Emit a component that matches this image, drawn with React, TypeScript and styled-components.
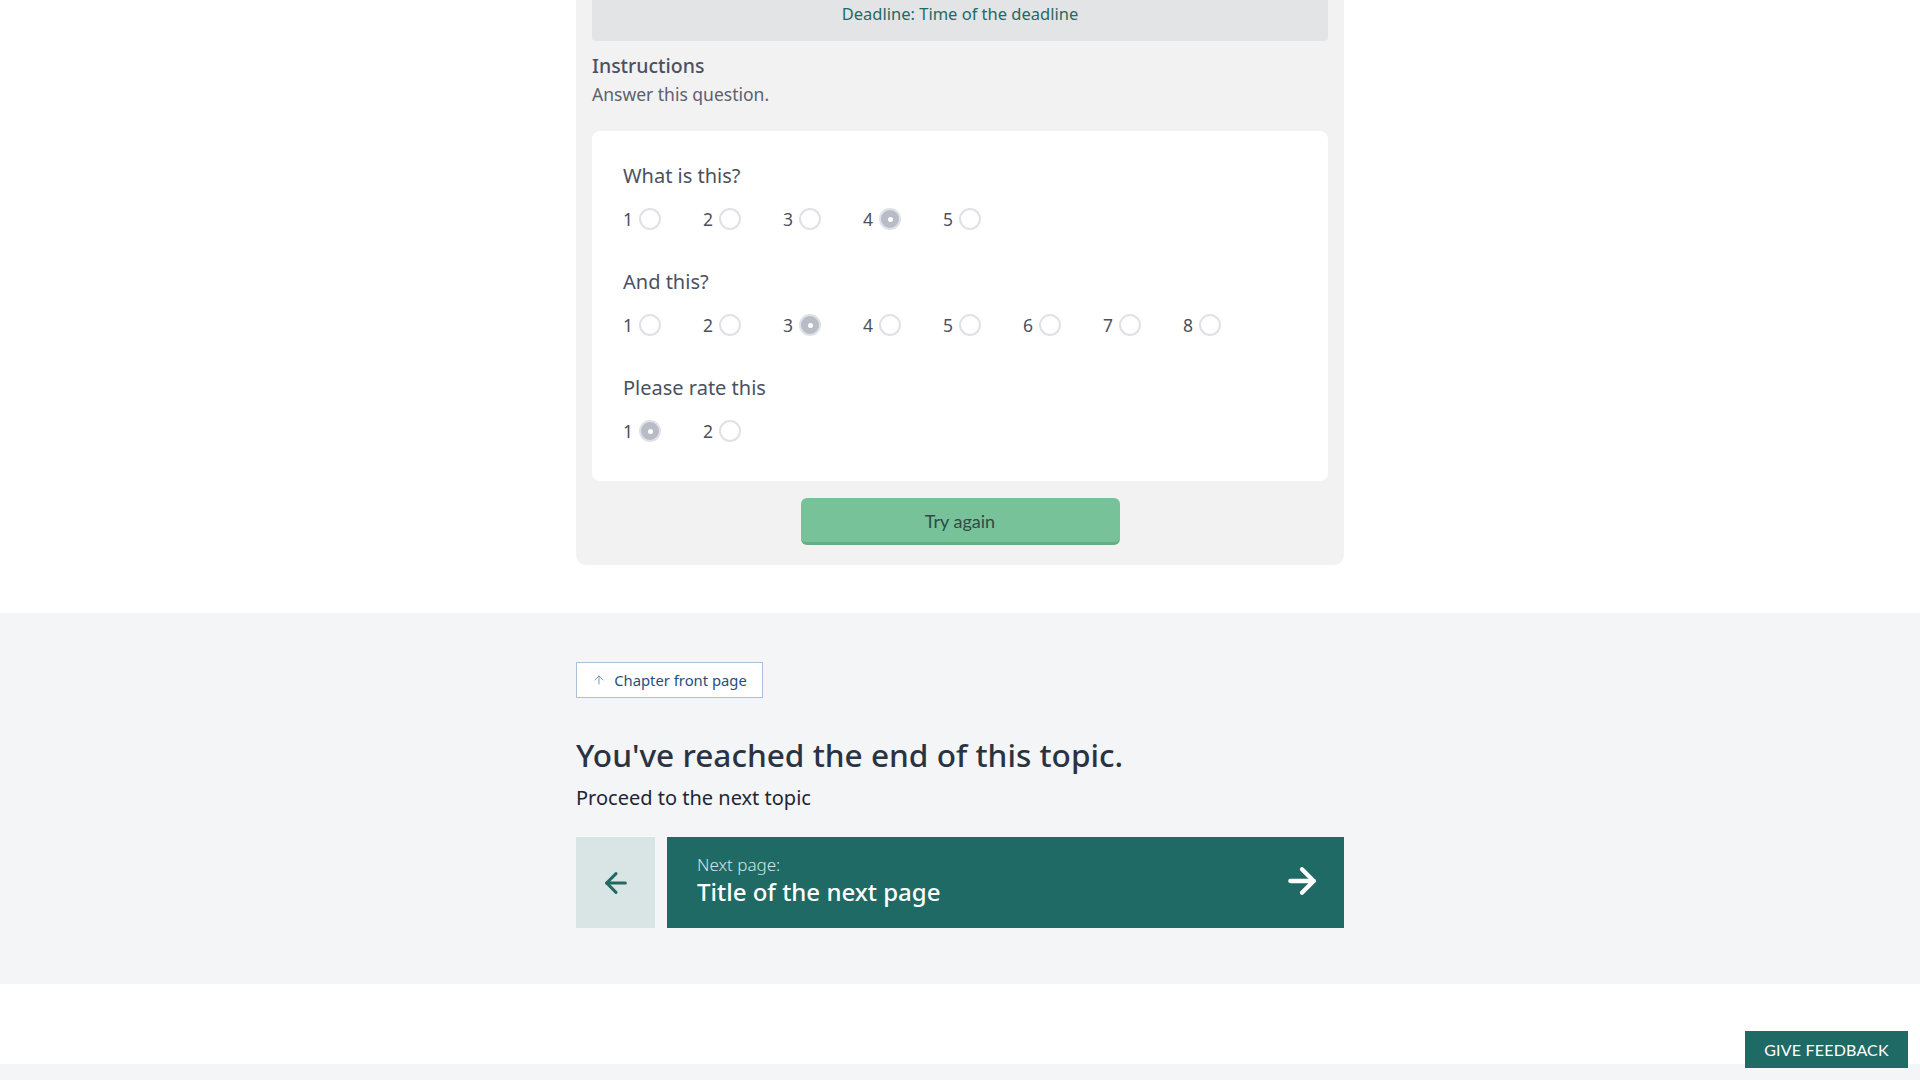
import React from 'react';
import styled, { createGlobalStyle } from 'styled-components';
import { ArrowUp, ArrowLeft, ArrowRight } from 'lucide-react';

const GlobalStyle = createGlobalStyle`
  html, body {
    margin: 0;
    padding: 0;
    background: #ffffff;
    font-family: 'Noto Sans', 'Lato', sans-serif;
    overflow: hidden;
  }
  * { box-sizing: border-box; }
`;

const Page = styled.div`
  display: flex;
  flex-direction: column;
  min-height: 1080px;
  background: #ffffff;
`;

const Top = styled.div`
  display: flex;
  justify-content: center;
  padding-bottom: 48px;
`;

const ExerciseCard = styled.section`
  width: 768px;
  margin-top: -30px;
  padding: 16px 16px 20px;
  background: #f2f2f2;
  border-radius: 10px;
  display: flex;
  flex-direction: column;
`;

const Deadline = styled.div`
  height: 55px;
  display: flex;
  align-items: center;
  justify-content: center;
  background: #e3e4e6;
  border-radius: 4px;
  color: #1f6a62;
  font-size: 16.5px;
`;

const InstructionsTitle = styled.h3`
  margin: 12px 0 0;
  font-size: 19.5px;
  font-weight: 500;
  line-height: 26px;
  color: #4a5160;
`;

const InstructionsText = styled.p`
  margin: 3px 0 0;
  font-size: 17.5px;
  line-height: 24px;
  color: #5b6170;
`;

const QuestionsBox = styled.div`
  margin-top: 25px;
  background: #ffffff;
  border-radius: 8px;
  padding: 32px 31px 38px;
  display: flex;
  flex-direction: column;
  gap: 38px;
`;

const Question = styled.div`
  display: flex;
  flex-direction: column;
  gap: 18px;
`;

const QuestionLabel = styled.div`
  font-size: 20px;
  line-height: 26px;
  color: #4a5160;
`;

const Options = styled.div`
  display: flex;
  height: 24px;
  align-items: center;
`;

const Option = styled.label`
  width: 80px;
  display: flex;
  align-items: center;
  gap: 6px;
  font-size: 17.5px;
  color: #4a5160;
`;

const Radio = styled.span<{ $checked?: boolean }>`
  width: 22px;
  height: 22px;
  border-radius: 50%;
  border: 2px solid #e0e1e6;
  background: ${(p) => (p.$checked ? '#b7bcc6' : '#ffffff')};
  display: flex;
  align-items: center;
  justify-content: center;

  &::after {
    content: '';
    width: 5px;
    height: 5px;
    border-radius: 50%;
    background: ${(p) => (p.$checked ? '#ffffff' : 'transparent')};
  }
`;

const TryAgain = styled.button`
  align-self: center;
  margin-top: 17px;
  width: 319px;
  height: 47px;
  border: none;
  border-bottom: 3px solid #67ad86;
  border-radius: 6px;
  background: #77c298;
  color: #2f4a46;
  font-family: 'Lato', sans-serif;
  font-size: 18px;
  padding-top: 2px;
`;

const EndSection = styled.section`
  background: #f4f5f7;
  display: flex;
  justify-content: center;
  padding: 49px 0 56px;
`;

const EndInner = styled.div`
  width: 768px;
  display: flex;
  flex-direction: column;
  align-items: flex-start;
`;

const ChapterLink = styled.a`
  height: 36px;
  width: 187px;
  display: flex;
  align-items: center;
  justify-content: center;
  gap: 8px;
  background: #ffffff;
  border: 1px solid #a9c0d8;
  color: #1f4f7e;
  font-size: 14.8px;
  text-decoration: none;

  svg { color: #6f8fae; }
`;

const EndTitle = styled.h2`
  margin: 37px 0 0;
  font-weight: 500;
  font-size: 31.6px;
  line-height: 40px;
  color: #2a3342;
`;

const EndText = styled.p`
  margin: 10px 0 0;
  font-size: 20px;
  line-height: 26px;
  color: #1f2633;
`;

const Nav = styled.nav`
  margin-top: 26px;
  width: 100%;
  height: 91px;
  display: flex;
  gap: 12px;
`;

const PrevButton = styled.a`
  width: 79px;
  background: #d9e5e5;
  color: #206a65;
  display: flex;
  align-items: center;
  justify-content: center;
`;

const NextButton = styled.a`
  flex: 1;
  background: #206a65;
  color: #ffffff;
  display: flex;
  align-items: center;
  justify-content: space-between;
  padding: 0 22px 3px 30px;
  text-decoration: none;
`;

const NextText = styled.div`
  display: flex;
  flex-direction: column;
`;

const NextLabel = styled.span`
  font-size: 17px;
  line-height: 22px;
  font-weight: 300;
  color: #d2e4e2;
`;

const NextTitle = styled.span`
  font-size: 24px;
  line-height: 32px;
  font-weight: 500;
`;

const Spacer = styled.div`
  height: 80px;
  background: #ffffff;
`;

const Footer = styled.footer`
  flex: 1;
  background: #f4f5f7;
`;

const Feedback = styled.button`
  position: fixed;
  right: 12px;
  bottom: 12px;
  width: 163px;
  height: 37px;
  border: none;
  background: #206a65;
  color: #ffffff;
  font-family: 'Lato', sans-serif;
  font-size: 16px;
  letter-spacing: 0.2px;
`;

const questions = [
  { label: 'What is this?', count: 5, checked: 4 },
  { label: 'And this?', count: 8, checked: 3 },
  { label: 'Please rate this', count: 2, checked: 1 },
];

export default function App() {
  return (
    <>
      <GlobalStyle />
      <Page>
        <Top>
          <ExerciseCard>
            <Deadline>Deadline: Time of the deadline</Deadline>
            <InstructionsTitle>Instructions</InstructionsTitle>
            <InstructionsText>Answer this question.</InstructionsText>
            <QuestionsBox>
              {questions.map((q) => (
                <Question key={q.label}>
                  <QuestionLabel>{q.label}</QuestionLabel>
                  <Options>
                    {Array.from({ length: q.count }, (_, i) => (
                      <Option key={i}>
                        {i + 1}
                        <Radio $checked={i + 1 === q.checked} />
                      </Option>
                    ))}
                  </Options>
                </Question>
              ))}
            </QuestionsBox>
            <TryAgain>Try again</TryAgain>
          </ExerciseCard>
        </Top>
        <EndSection>
          <EndInner>
            <ChapterLink href="#">
              <ArrowUp size={14} strokeWidth={1.5} />
              Chapter front page
            </ChapterLink>
            <EndTitle>You've reached the end of this topic.</EndTitle>
            <EndText>Proceed to the next topic</EndText>
            <Nav>
              <PrevButton href="#">
                <ArrowLeft size={32} strokeWidth={2.3} />
              </PrevButton>
              <NextButton href="#">
                <NextText>
                  <NextLabel>Next page:</NextLabel>
                  <NextTitle>Title of the next page</NextTitle>
                </NextText>
                <ArrowRight size={40} strokeWidth={2.6} />
              </NextButton>
            </Nav>
          </EndInner>
        </EndSection>
        <Spacer />
        <Footer />
        <Feedback>GIVE FEEDBACK</Feedback>
      </Page>
    </>
  );
}
